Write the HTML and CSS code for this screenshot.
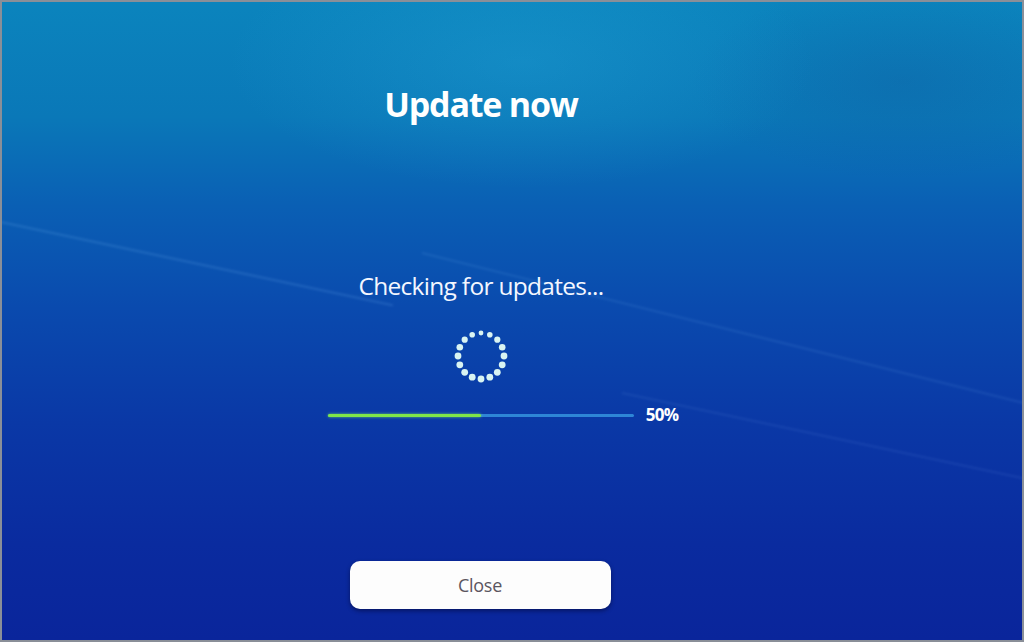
FILE: index.html
```html
<!DOCTYPE html>
<html>
<head>
<meta charset="utf-8">
<link rel="stylesheet" href="styles.css">
</head>
<body>
<div class="screen">
  <div class="streak s1"></div>
  <div class="streak s2"></div>
  <div class="streak s3"></div>
  <h1 class="title">Update now</h1>
  <p class="status">Checking for updates...</p>
  <div class="spinner">
    <svg width="56" height="56" viewBox="-28 -28 56 56">
      <g fill="#d9f4f2">
        <circle cx="0" cy="-23" r="2.4"/>
        <circle cx="8.8" cy="-21.2" r="2.8"/>
        <circle cx="16.3" cy="-16.3" r="3.1"/>
        <circle cx="21.2" cy="-8.8" r="3.3"/>
        <circle cx="23" cy="0" r="3.4"/>
        <circle cx="21.2" cy="8.8" r="3.4"/>
        <circle cx="16.3" cy="16.3" r="3.4"/>
        <circle cx="8.8" cy="21.2" r="3.4"/>
        <circle cx="0" cy="23" r="3.4"/>
        <circle cx="-8.8" cy="21.2" r="3.4"/>
        <circle cx="-16.3" cy="16.3" r="3.4"/>
        <circle cx="-21.2" cy="8.8" r="3.4"/>
        <circle cx="-23" cy="0" r="3.4"/>
        <circle cx="-21.2" cy="-8.8" r="3.3"/>
        <circle cx="-16.3" cy="-16.3" r="3.1"/>
        <circle cx="-8.8" cy="-21.2" r="2.8"/>
      </g>
    </svg>
  </div>
  <div class="progress">
    <div class="track"><div class="fill" style="width:50%"></div></div>
    <span class="pct">50%</span>
  </div>
  <button class="close">Close</button>
</div>
</body>
</html>
```
FILE: styles.css
```css
* { box-sizing: border-box; }
html, body { margin: 0; padding: 0; width: 1024px; height: 642px; overflow: hidden; }
body { background: #8a8f98; padding: 2px; font-family: "Open Sans", "Noto Sans", sans-serif; }
.screen {
  position: relative;
  width: 1020px;
  height: 638px;
  overflow: hidden;
  display: flex;
  flex-direction: column;
  align-items: center;
  padding-right: 62px;
  background:
    radial-gradient(ellipse 420px 180px at 520px 60px, rgba(40,170,220,0.3), rgba(40,170,220,0) 70%),
    radial-gradient(ellipse 300px 140px at 900px 80px, rgba(20,80,150,0.25), rgba(20,80,150,0) 70%),
    linear-gradient(180deg, #0b84bd 0%, #0a78b8 18%, #0a5fb4 32%, #0a4aae 48%, #0a38a6 66%, #0a2b9f 85%, #0a259b 100%);
}
.streak { position: absolute; height: 2px; background: rgba(140,200,255,0.16); transform-origin: left center; filter: blur(1px); }
.s1 { left: -20px; top: 215px; width: 420px; transform: rotate(12deg); }
.s2 { left: 420px; top: 250px; width: 640px; transform: rotate(14deg); background: rgba(140,200,255,0.11); }
.s3 { left: 620px; top: 390px; width: 440px; transform: rotate(12deg); background: rgba(140,200,255,0.09); }
.title {
  position: relative;
  margin: 78px 0 0;
  color: #fff;
  font-size: 34px;
  font-weight: 700;
  letter-spacing: -1.2px;
  line-height: 48px;
}
.status {
  position: relative;
  margin: 142px 0 0;
  color: #f4f7ff;
  font-size: 24.5px;
  font-weight: 400;
  letter-spacing: -0.7px;
  line-height: 32px;
}
.spinner { position: relative; margin: 26px 0 0; width: 56px; height: 56px; }
.spinner svg { display: block; }
.progress {
  position: relative;
  margin: 20px 0 0 44px;
  display: flex;
  align-items: center;
  gap: 12px;
}
.track { width: 306px; height: 3px; background: #2e86d6; border-radius: 2px; }
.fill { height: 3px; background: #7fe648; border-radius: 2px; box-shadow: 0 0 3px rgba(140,255,90,0.7); }
.pct { color: #fff; font-size: 17px; font-weight: 700; letter-spacing: -0.7px; line-height: 22px; }
.close {
  position: relative;
  margin: 135px 0 0 -2px;
  width: 261px;
  height: 48px;
  border: none;
  border-radius: 10px;
  background: #fdfdfd;
  box-shadow: 0 2px 4px rgba(0,0,30,0.45);
  color: #5a5560;
  font-family: "Open Sans", "Noto Sans", sans-serif;
  font-size: 18px;
  letter-spacing: -0.3px;
}
```
